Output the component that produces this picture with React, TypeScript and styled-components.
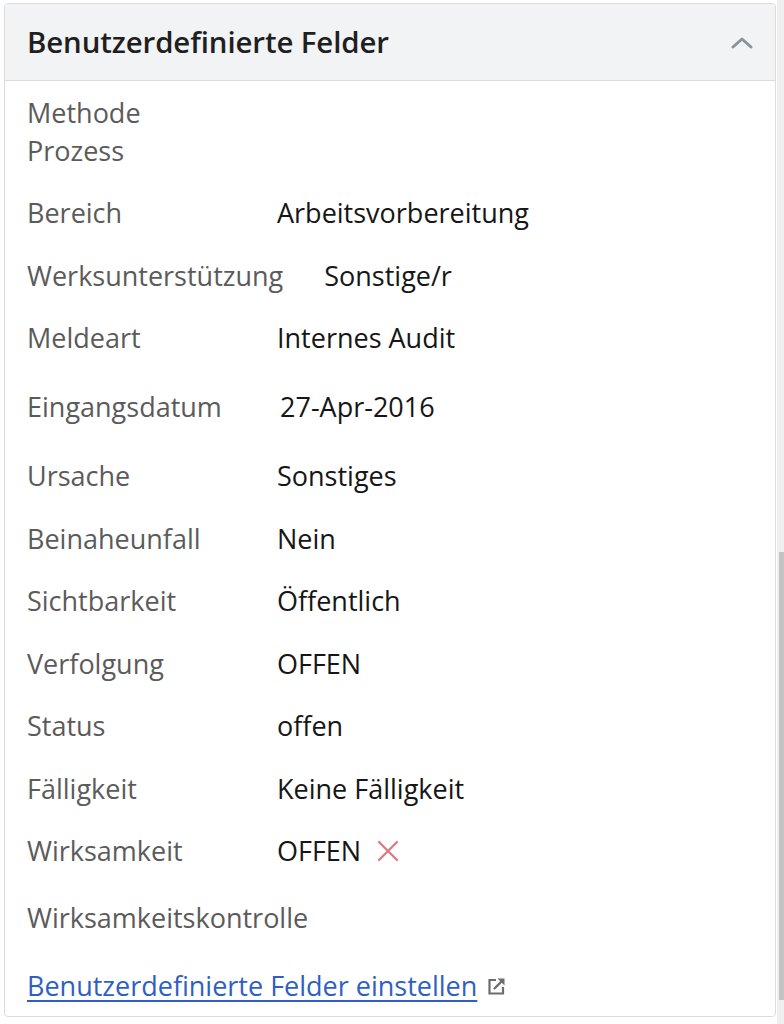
import React from 'react';
import styled, { createGlobalStyle } from 'styled-components';

const GlobalStyle = createGlobalStyle`
    html, body {
        margin: 0;
        padding: 0;
        background: #ffffff;
    }
    body {
        font-family: 'Open Sans', 'Liberation Sans', sans-serif;
    }
`;

const PageWrap = styled.div`
    display: flex;
    align-items: flex-start;
    padding: 3px 0 0 4px;
    height: 1021px;
    gap: 1px;
`;

const CardBox = styled.section`
    flex: 1;
    border: 1px solid #dcdcdc;
    border-radius: 4px;
    background: #ffffff;
    overflow: hidden;
`;

const CardHeader = styled.header`
    display: flex;
    align-items: center;
    justify-content: space-between;
    height: 76px;
    padding: 0 22px 0 22px;
    background: #f2f3f5;
    border-bottom: 1px solid #dcdcdc;

    h2 {
        margin: 0;
        font-size: 29.4px;
        font-weight: 600;
        color: #1f1f1f;
        letter-spacing: -0.1px;
    }
`;

const CardBody = styled.div`
    padding: 1px 22px 11px 22px;
`;

const FieldRow = styled.div<{ $pt?: number; $pb?: number }>`
    display: flex;
    align-items: flex-start;
    padding-top: ${p => p.$pt ?? 12.25}px;
    padding-bottom: ${p => p.$pb ?? 12.25}px;
    font-size: 27px;
    line-height: 38px;
`;

const FieldLabel = styled.div`
    min-width: 209px;
    padding-right: 41px;
    flex-shrink: 0;
    color: #5b5b5b;
`;

const FieldValue = styled.div<{ $indent?: number }>`
    display: flex;
    align-items: center;
    gap: 16px;
    padding-left: ${p => p.$indent ?? 0}px;
    color: #161616;
`;

const SettingsLink = styled.a`
    display: inline-flex;
    align-items: center;
    gap: 10px;
    font-size: 27px;
    line-height: 38px;
    color: #2f5fc6;
    text-decoration: underline;
    text-underline-offset: 4px;
    cursor: pointer;

    svg {
        margin-top: 2px;
    }
`;

const LinkRow = styled.div`
    padding-top: 18px;
`;

const ScrollTrack = styled.div`
    width: 7px;
    align-self: stretch;
    margin-top: -3px;
    background: #efefef;
    display: flex;
    flex-direction: column;
`;

const ScrollThumb = styled.div`
    margin-top: 552px;
    height: 448px;
    margin-left: 2px;
    width: 5px;
    background: #c3c3c3;
`;

const ChevronUp = () => (
    <svg width="22" height="14" viewBox="0 0 22 14" fill="none">
        <path d="M2 12 L11 4 L20 12" stroke="#8d939b" strokeWidth="3" strokeLinecap="round" strokeLinejoin="round" />
    </svg>
);

const RemoveMark = () => (
    <svg width="22" height="22" viewBox="0 0 22 22" fill="none">
        <path d="M2 2 L20 20 M20 2 L2 20" stroke="#e07680" strokeWidth="2.2" strokeLinecap="round" />
    </svg>
);

const ExternalIcon = () => (
    <svg width="19" height="19" viewBox="0 0 19 19" fill="none">
        <path d="M9 3 H2.5 V16.5 H16 V10" stroke="#6d6d6d" strokeWidth="2.2" />
        <path d="M7 12 L16 3" stroke="#6d6d6d" strokeWidth="2.4" />
        <path d="M10.5 1.5 H17.5 V8.5 Z" fill="#6d6d6d" />
    </svg>
);

type Field = { label: string; value?: React.ReactNode; pt?: number; pb?: number; indent?: number };

const fields: Field[] = [
    { label: 'Bereich', value: 'Arbeitsvorbereitung' },
    { label: 'Werksunterstützung', value: 'Sonstige/r' },
    { label: 'Meldeart', value: 'Internes Audit' },
    { label: 'Eingangsdatum', value: '27-Apr-2016', pt: 18.75, pb: 18.75, indent: 3 },
    { label: 'Ursache', value: 'Sonstiges' },
    { label: 'Beinaheunfall', value: 'Nein' },
    { label: 'Sichtbarkeit', value: 'Öffentlich' },
    { label: 'Verfolgung', value: 'OFFEN' },
    { label: 'Status', value: 'offen' },
    { label: 'Fälligkeit', value: 'Keine Fälligkeit' },
    {
        label: 'Wirksamkeit',
        value: (
            <>
                <span>OFFEN</span>
                <RemoveMark />
            </>
        ),
    },
    { label: 'Wirksamkeitskontrolle', pt: 16, pb: 12 },
];

const App = () => {
    return (
        <>
            <GlobalStyle />
            <PageWrap>
                <CardBox>
                    <CardHeader>
                        <h2>Benutzerdefinierte Felder</h2>
                        <ChevronUp />
                    </CardHeader>
                    <CardBody>
                        <FieldRow $pt={12} $pb={12}>
                            <FieldLabel>
                                Methode
                                <br />
                                Prozess
                            </FieldLabel>
                        </FieldRow>
                        {fields.map(f => (
                            <FieldRow key={f.label} $pt={f.pt} $pb={f.pb}>
                                <FieldLabel>{f.label}</FieldLabel>
                                {f.value !== undefined && <FieldValue $indent={f.indent}>{f.value}</FieldValue>}
                            </FieldRow>
                        ))}
                        <LinkRow>
                            <SettingsLink>
                                Benutzerdefinierte Felder einstellen
                                <ExternalIcon />
                            </SettingsLink>
                        </LinkRow>
                    </CardBody>
                </CardBox>
                <ScrollTrack>
                    <ScrollThumb />
                </ScrollTrack>
            </PageWrap>
        </>
    );
};

export default App;
